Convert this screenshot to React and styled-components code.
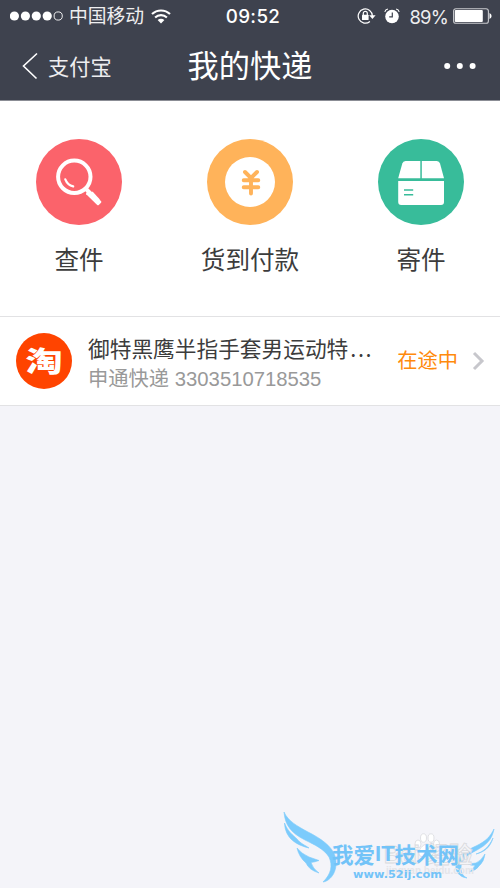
import React from "react";
import styled, { createGlobalStyle } from "styled-components";

const GlobalStyle = createGlobalStyle`
  * {
    box-sizing: border-box;
  }

  body {
    margin: 0;
    background: #f4f4f9;
    font-family: "Liberation Sans", "Noto Sans CJK SC", sans-serif;
    overflow: hidden;
  }
`;

const services = [
  { label: "查件", color: "#fb636b", Icon: SearchIcon },
  { label: "货到付款", color: "#ffb35a", Icon: CashIcon },
  { label: "寄件", color: "#38bc9a", Icon: BoxIcon },
];

export default function App() {
  return (
    <Screen>
      <GlobalStyle />
      <Header>
        <StatusBar>
          <StatusGroup>
            <SignalIcon />
            <Carrier>中国移动</Carrier>
            <WifiIcon />
          </StatusGroup>
          <Clock>09:52</Clock>
          <StatusGroup end>
            <LockIcon />
            <AlarmIcon />
            <Percent>89%</Percent>
            <BatteryIcon />
          </StatusGroup>
        </StatusBar>
        <NavBar>
          <BackButton>
            <svg width="16" height="28" viewBox="0 0 16 28">
              <path d="M15 1.5 1.5 14 14.5 26.5" fill="none" stroke="#fff" strokeWidth="1.6" />
            </svg>
            支付宝
          </BackButton>
          <Title>我的快递</Title>
          <MoreButton aria-label="更多">
            <svg width="34" height="8" viewBox="0 0 34 8">
              <circle cx="3.2" cy="4" r="3" fill="#fff" />
              <circle cx="15.8" cy="4" r="3" fill="#fff" />
              <circle cx="28.6" cy="4" r="3" fill="#fff" />
            </svg>
          </MoreButton>
        </NavBar>
      </Header>

      <Services>
        {services.map(({ label, color, Icon }) => (
          <Service key={label}>
            <ServiceCircle color={color}>
              <Icon />
            </ServiceCircle>
            <ServiceLabel>{label}</ServiceLabel>
          </Service>
        ))}
      </Services>

      <Parcel>
        <ShopLogo>
          <span>淘</span>
        </ShopLogo>
        <ParcelInfo>
          <ParcelName>
            御特黑鹰半指手套男运动特<Dots>...</Dots>
          </ParcelName>
          <ParcelNumber>申通快递 3303510718535</ParcelNumber>
        </ParcelInfo>
        <ParcelStatus>在途中</ParcelStatus>
        <svg width="13" height="20" viewBox="0 0 13 20">
          <path d="M2 2 10 10 2 18" fill="none" stroke="#c7c7cc" strokeWidth="3" />
        </svg>
      </Parcel>

      <Watermark />
    </Screen>
  );
}

function SignalIcon() {
  return (
    <svg width="54" height="12" viewBox="0 0 54 12">
      {[4.4, 15.4, 26.3, 37.2].map((x) => (
        <circle key={x} cx={x} cy="6" r="4.6" fill="#fff" />
      ))}
      <circle cx="48.2" cy="6" r="4.1" fill="none" stroke="#fff" strokeWidth="0.9" />
    </svg>
  );
}

function WifiIcon() {
  return (
    <svg width="20" height="15" viewBox="0 0 20 15">
      <g fill="none" stroke="#fff" strokeWidth="2.1">
        <path d="M1 5.1C6 .2 14 .2 19 5.1" />
        <path d="M4.1 8.5C7.4 5.3 12.6 5.3 15.9 8.5" />
      </g>
      <path d="M6.6 11C8.6 9.2 11.4 9.2 13.4 11L10 14.5Z" fill="#fff" />
    </svg>
  );
}

function LockIcon() {
  return (
    <svg width="19" height="18" viewBox="0 0 19 18">
      <path d="M15.4 9A7.1 7.1 0 1 0 12.9 14.5" fill="none" stroke="#fff" strokeWidth="1.2" />
      <path d="M12.2 8.2H18.6L15.4 12Z" fill="#fff" />
      <rect x="5" y="7.7" width="6.6" height="5.3" rx=".6" fill="#fff" />
      <path d="M6.3 8V6.3a2 2 0 0 1 4 0V8" fill="none" stroke="#fff" strokeWidth="1.2" />
    </svg>
  );
}

function AlarmIcon() {
  return (
    <svg width="16" height="16" viewBox="0 0 16 16">
      <circle cx="8" cy="8.5" r="6.8" fill="#fff" />
      <path d="M.8 3.8Q1.5 1.5 3.9 1M15.2 3.8Q14.5 1.5 12.1 1" fill="none" stroke="#fff" strokeWidth="1.1" />
      <path d="M8.3 4.5V8.8H5.2" fill="none" stroke="#3e424e" strokeWidth="1.2" />
    </svg>
  );
}

function BatteryIcon() {
  return (
    <svg width="39" height="16" viewBox="0 0 39 16">
      <rect x=".6" y=".7" width="34.8" height="14.6" rx="2.4" fill="none" stroke="#c9cace" strokeWidth="1.1" />
      <rect x="1.8" y="2" width="28" height="12" rx="1" fill="#fff" />
      <path d="M36.5 5Q38.6 5.8 38.6 8T36.5 11Z" fill="#fff" />
    </svg>
  );
}

function SearchIcon() {
  return (
    <svg width="86" height="86" viewBox="0 0 86 86">
      <circle cx="38.3" cy="37.8" r="16.2" fill="none" stroke="#fff" strokeWidth="4" />
      <path d="M29.3 40.3Q31.5 46 37.2 47.4" fill="none" stroke="#fff" strokeWidth="2.2" strokeLinecap="round" />
      <path d="M48.5 48.5 55 55" stroke="#fff" strokeWidth="4" />
      <path d="M54.7 54.2 62 62.2" stroke="#fff" strokeWidth="5" />
      <path d="M53.5 51.8 65.2 62.3Q65.6 63 65 63.8L62.8 66Q62 66.6 61.2 66L50.2 55.2Q49.8 54.5 50.4 53.8L52 52Q52.8 51.4 53.5 51.8Z" fill="#fff" />
    </svg>
  );
}

function CashIcon() {
  return (
    <svg width="86" height="86" viewBox="0 0 86 86">
      <circle cx="43" cy="43" r="25" fill="#fff" />
      <path
        d="M38 33 44 39 50 33M36.7 41.2H51.3M36.7 48.2H51.3M44 40V54.5"
        fill="none"
        stroke="#ffb35a"
        strokeWidth="3.9"
        strokeLinecap="round"
        strokeLinejoin="round"
      />
    </svg>
  );
}

function BoxIcon() {
  return (
    <svg width="86" height="86" viewBox="0 0 86 86">
      <path d="M27.5 22H42.3V39.3H20.2L24.3 24.5Q25 22 27.5 22Z" fill="#fff" />
      <path d="M43.8 22H58.8Q61.3 22 62 24.5L66 39.3H43.8Z" fill="#fff" />
      <path d="M20.2 42H66V63Q66 66 63 66H23.2Q20.2 66 20.2 63Z" fill="#fff" />
      <path d="M26 51H35.2M26 55.8H35.2" stroke="#38bc9a" strokeWidth="1.6" />
    </svg>
  );
}

function Wings() {
  return (
    <svg
      width="230"
      height="88"
      viewBox="0 0 230 88"
      fill="#7ccbfc"
      stroke="#7ccbfc"
      strokeWidth=".6"
      strokeLinejoin="round"
    >
      <path d="M14 12C18 21 27 26 38 32C50 38 62 46 65 56C69 70 61 81 53 82C61 74 63 66 59 57C54 49 45 45 35 40C21 33 15 25 14 12Z" />
      <path d="M14.5 23C18 32 23 35 27 39C31 44 35 45 39 48C26 45 15 38 14.5 23Z" />
      <path d="M27 48Q32 54 39 57L49 60.5Q45 62 41 62.5Q43 69 49 73Q39 70 36 63Q29 57 27 48Z" />
      <path d="M224 29C222 40 216 45 207 50C197 55 191 60 191 68C191 73 193 76 197 78C189 77 185 71 186 65C187 56 197 50 206 46C216 41 220 37 224 29Z" />
      <path d="M223 38C220 48 214 52 206 54C213 52 219 47 223 38Z" />
      <path d="M215 54Q211 61 206 63L198 64Q202 66 205 65Q204 69 199 72Q207 70 209 66Q214 62 215 54Z" />
    </svg>
  );
}

function PawIcon() {
  return (
    <svg width="28" height="26" viewBox="0 0 28 26">
      <g fill="#fff" stroke="#d9dade" strokeWidth=".8">
        <ellipse cx="5" cy="11" rx="3" ry="4" />
        <ellipse cx="10.5" cy="5" rx="3" ry="4.2" />
        <ellipse cx="18" cy="5" rx="3" ry="4.2" />
        <ellipse cx="23.5" cy="11" rx="3" ry="4" />
        <path d="M14 11C18 11 23 17 22 21C21 25 17 23 14 23S7 25 6 21C5 17 10 11 14 11Z" />
      </g>
    </svg>
  );
}

function Watermark() {
  return (
    <WatermarkLayer>
      <PawPlace>
        <PawIcon />
      </PawPlace>
      <FaintName>Bai 经验</FaintName>
      <FaintUrl>jingyan.baidu.com</FaintUrl>
      <Wings />
      <SiteName>
        <span>我爱</span>
        <Latin>IT</Latin>
        <span>技术网</span>
      </SiteName>
      <SiteUrl>
        <svg width="92" height="16">
          <text x="1" y="11.5" textLength="89" lengthAdjust="spacingAndGlyphs">www.52ij.com</text>
        </svg>
      </SiteUrl>
    </WatermarkLayer>
  );
}

const Screen = styled.div`
  position: relative;
  width: 500px;
  height: 888px;
  overflow: hidden;
  background: #f4f4f9;
`;

const Header = styled.header`
  height: 101px;
  background: #3e424e;
  border-bottom: 1px solid #8b8d95;
  color: #fff;
`;

const StatusBar = styled.div`
  display: grid;
  grid-template-columns: 1fr 60px 1fr;
  align-items: center;
  height: 32px;
  padding: 0 8px 0 10px;
`;

const StatusGroup = styled.div.withConfig({ shouldForwardProp: (p) => p !== "end" })`
  display: flex;
  align-items: center;
  justify-content: ${(props) => (props.end ? "flex-end" : "flex-start")};
  gap: ${(props) => (props.end ? "8px" : "0")};
`;

const Carrier = styled.span`
  margin: -2px 7px 0 5px;
  font: 400 18.8px/24px "Noto Sans CJK SC", sans-serif;
  color: #eeeef0;
  white-space: nowrap;
`;

const Clock = styled.span`
  padding: 1px 0 0 4px;
  font: 500 18.8px/24px Inter, sans-serif;
  letter-spacing: 0.35px;
  text-align: center;
`;

const Percent = styled.span`
  margin: 2px -3px 0 2px;
  color: #eeeef0;
  font: 400 18.4px/24px Inter, sans-serif;
  letter-spacing: -0.8px;
`;

const NavBar = styled.nav`
  display: grid;
  grid-template-columns: 1fr auto 1fr;
  align-items: center;
  height: 68px;
  padding: 0 22px;
`;

const BackButton = styled.button`
  display: flex;
  align-items: center;
  gap: 10px;
  padding: 0;
  border: none;
  background: none;
  color: #eeeef0;
  font: 400 21.2px/30px "Noto Sans CJK SC", sans-serif;
`;

const Title = styled.h1`
  margin: -4px 0 0;
  font: 400 31.2px/40px "Noto Sans CJK SC", sans-serif;
`;

const MoreButton = styled.button`
  display: flex;
  justify-self: end;
  padding: 0;
  border: none;
  background: none;
`;

const Services = styled.section`
  display: flex;
  justify-content: space-between;
  height: 216px;
  padding: 38px 22px 0;
  background: #fff;
  border-bottom: 1px solid #e2e2e4;
`;

const Service = styled.div`
  display: flex;
  flex-direction: column;
  align-items: center;
  width: 114px;
`;

const ServiceCircle = styled.div`
  display: flex;
  width: 86px;
  height: 86px;
  border-radius: 50%;
  background: ${(props) => props.color};
`;

const ServiceLabel = styled.span`
  margin-top: 15px;
  color: #3c3c3c;
  font: 400 24.6px/36px "Noto Sans CJK SC", sans-serif;
  white-space: nowrap;
`;

const Parcel = styled.section`
  display: flex;
  align-items: center;
  height: 89px;
  padding: 0 15px 0 16px;
  background: #fff;
  border-bottom: 1px solid #e2e2e4;
`;

const ShopLogo = styled.div`
  display: flex;
  align-items: center;
  justify-content: center;
  flex-shrink: 0;
  width: 56px;
  height: 56px;
  border-radius: 50%;
  background: #ff4400;
  color: #fff;
  font: 900 34px/34px "Noto Sans CJK SC", sans-serif;

  span {
    transform: translateY(-1px) scale(1.09, 0.85);
  }
`;

const ParcelInfo = styled.div`
  flex: 1;
  margin: 4px 0 0 16px;
  white-space: nowrap;
`;

const ParcelName = styled.div`
  color: #3c3c3c;
  font: 400 21.7px/30px "Noto Sans CJK SC", sans-serif;
`;

const Dots = styled.span`
  margin-left: 2px;
  letter-spacing: 1.6px;
`;

const ParcelNumber = styled.div`
  margin-top: 2px;
  color: #999;
  font: 400 20.3px/28px "Liberation Sans", "Noto Sans CJK SC", sans-serif;
`;

const ParcelStatus = styled.span`
  margin: -5px 14px 0 0;
  color: #ff8a0c;
  font: 400 20.3px/30px "Noto Sans CJK SC", sans-serif;
`;

const WatermarkLayer = styled.div`
  position: absolute;
  left: 270px;
  top: 800px;
  width: 230px;
  height: 88px;
`;

const PawPlace = styled.div`
  position: absolute;
  left: 143px;
  top: 33px;
`;

const FaintName = styled.div`
  position: absolute;
  left: 114px;
  top: 42px;
  color: #f4f4f7;
  font: 700 23px/26px "Liberation Sans", "Noto Sans CJK SC", sans-serif;
  -webkit-text-stroke: 0.8px #d9dade;
  white-space: nowrap;
`;

const FaintUrl = styled.div`
  position: absolute;
  left: 116px;
  top: 64px;
  color: #e4e5e9;
  font: 700 10px/13px "Liberation Sans", sans-serif;
`;

const SiteName = styled.div`
  position: absolute;
  left: 62px;
  top: 41px;
  display: flex;
  align-items: center;
  color: #72c3f8;
  font: 700 21.5px/26px "Noto Sans CJK SC", sans-serif;
  white-space: nowrap;
`;

const Latin = styled.span`
  font: 700 22px/26px "Liberation Sans", sans-serif;
`;

const SiteUrl = styled.div`
  position: absolute;
  left: 82px;
  top: 66px;
  fill: #72c3f8;
  font: 700 11px/16px "DejaVu Sans", sans-serif;
`;
